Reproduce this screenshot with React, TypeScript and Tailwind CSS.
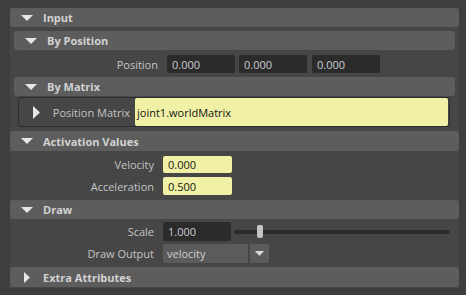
import React from "react"

function DownTri({ className = "" }: { className?: string }) {
  return (
    <svg width="12" height="6" viewBox="0 0 12 6" className={className}>
      <path d="M0 0H12L6 6Z" fill="#e6e6e6" />
    </svg>
  )
}

function RightTri({ w = 6, h = 11 }: { w?: number; h?: number }) {
  return (
    <svg width={w} height={h} viewBox={`0 0 ${w} ${h}`}>
      <path d={`M0 0L${w} ${h / 2}L0 ${h}Z`} fill="#e6e6e6" />
    </svg>
  )
}

function Header({ label, open = true, className = "" }: { label: string; open?: boolean; className?: string }) {
  return (
    <div className={`flex items-center rounded-[3px] bg-[#5d5d5d] ${className}`}>
      <div className="flex w-[33px] shrink-0 justify-center pl-[1px]">
        {open ? <DownTri /> : <RightTri />}
      </div>
      <span className="font-bold text-[#d2d2d2]">{label}</span>
    </div>
  )
}

function Label({ text }: { text: string }) {
  return <span className="w-[145px] shrink-0 pr-px text-right text-[#c4c4c4]">{text}</span>
}

function DarkField({ value }: { value: string }) {
  return (
    <div className="flex h-full w-[68px] items-center rounded-[2px] bg-[#2b2b2b] pl-[5px] text-[#c8cdd4]">{value}</div>
  )
}

function YellowField({ value, className = "" }: { value: string; className?: string }) {
  return (
    <div className={`flex h-full items-center rounded-[2px] bg-[#f0f0a6] text-[#151515] ${className}`}>{value}</div>
  )
}

export default function App() {
  return (
    <div className="h-[295px] w-[466px] overflow-hidden bg-[#3e3e3e] pl-[10px] pt-2 font-['Open_Sans',sans-serif] text-[11px] leading-none">
      <div className="w-[449px] bg-[#464646] pb-px">
        <Header label="Input" className="h-[19px]" />

        {/* Input body */}
        <div className="px-1">
          <Header label="By Position" className="mt-1 h-[19px]" />
          <div className="mt-[5px] flex h-[18px] items-center">
            <Label text="Position" />
            <div className="ml-2 flex h-full gap-1">
              <DarkField value="0.000" />
              <DarkField value="0.000" />
              <div className="ml-px h-full">
                <DarkField value="0.000" />
              </div>
            </div>
          </div>

          <Header label="By Matrix" className="mt-1 h-[19px]" />
          <div className="ml-1 mr-[5px] mt-px flex h-[30px] items-center rounded-[3px] border border-[#2c2c2c] pr-px">
            <div className="flex w-[33px] shrink-0 justify-center pl-[2px]">
              <RightTri w={7} h={13} />
            </div>
            <span className="w-[78px] shrink-0 text-right text-[#c4c4c4]">Position Matrix</span>
            <YellowField value="joint1.worldMatrix" className="ml-[5px] h-[18px] flex-1 pl-[2px]" />
          </div>
        </div>

        <Header label="Activation Values" className="mt-1 h-[20px]" />
        <div className="mt-[5px] flex h-[17px] items-center">
          <Label text="Velocity" />
          <YellowField value="0.000" className="ml-2 w-[69px] pl-[5px]" />
        </div>
        <div className="mt-1 flex h-[18px] items-center">
          <Label text="Acceleration" />
          <YellowField value="0.500" className="ml-2 w-[69px] pl-[5px]" />
        </div>

        <Header label="Draw" className="mt-[5px] h-[19px]" />
        <div className="mt-[3px] flex h-[19px] items-center">
          <Label text="Scale" />
          <div className="ml-2 h-full">
            <div className="flex h-full w-[68px] items-center rounded-[2px] bg-[#2b2b2b] pl-[5px] text-[#c8cdd4]">1.000</div>
          </div>
          <div className="relative ml-[3px] flex h-full w-[216px] items-center">
            <div className="h-[4px] w-full rounded-full bg-[#2b2b2b]" />
            <div className="absolute left-[23px] top-[3px] h-[13px] w-[6px] rounded-[2px] bg-[#c4c4c4]" />
          </div>
        </div>
        <div className="mt-[3px] flex h-[19px] items-center">
          <Label text="Draw Output" />
          <div className="ml-2 flex h-full gap-[2px]">
            <div className="flex h-full w-[85px] items-center rounded-l-[2px] bg-[#5b5b5b] pl-1 text-[#d0d0d0]">velocity</div>
            <div className="flex h-full w-[19px] items-center justify-center rounded-r-[2px] bg-[#5b5b5b]">
              <svg width="9" height="5" viewBox="0 0 9 5">
                <path d="M0 0H9L4.5 5Z" fill="#d8d8d8" />
              </svg>
            </div>
          </div>
        </div>

        <Header label="Extra Attributes" open={false} className="mt-1 h-[20px]" />
      </div>
    </div>
  )
}
